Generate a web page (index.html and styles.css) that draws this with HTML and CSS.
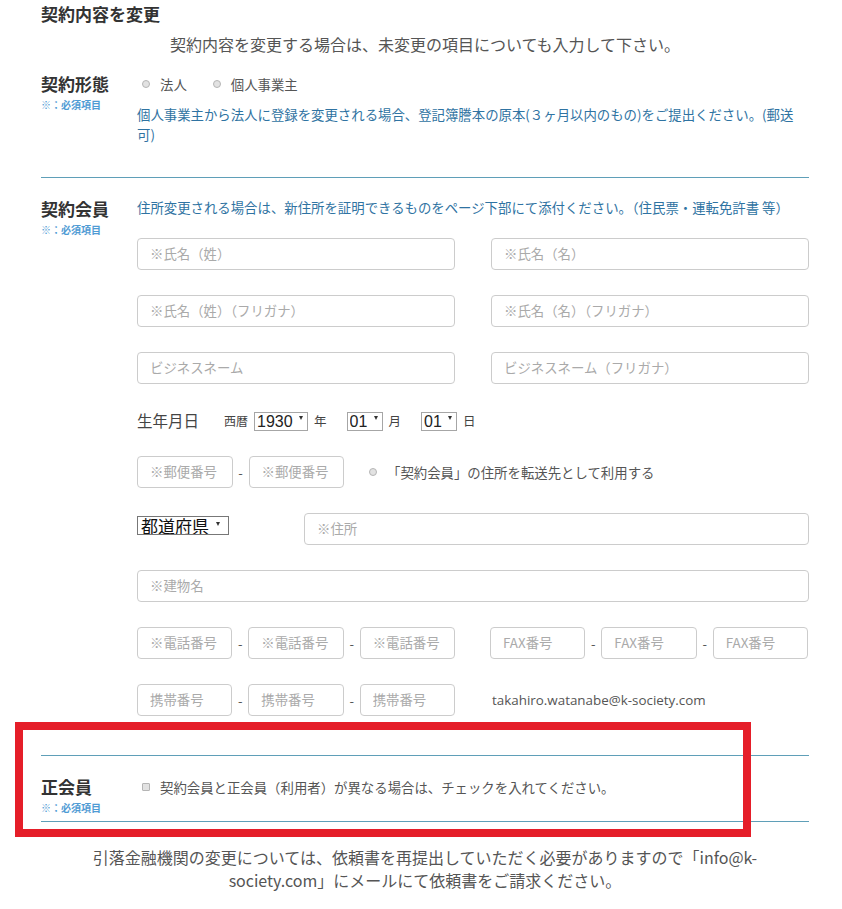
FILE: index.html
```html
<!DOCTYPE html>
<html lang="ja">
<head>
    <meta charset="UTF-8">
    <title>契約内容を変更</title>
    <link rel="stylesheet" href="styles.css">
</head>
<body>
    <div class="wrap">
        <h2 class="ttl">契約内容を変更</h2>
        <p class="lead">契約内容を変更する場合は、未変更の項目についても入力して下さい。</p>

        <!-- 契約形態 -->
        <div class="row first">
            <div class="row-label">
                <h3>契約形態</h3>
                <span class="req">※：必須項目</span>
            </div>
            <div class="row-body">
                <div class="opts">
                    <label class="opt"><input type="radio" name="type">法人</label>
                    <label class="opt"><input type="radio" name="type">個人事業主</label>
                </div>
                <p class="note">個人事業主から法人に登録を変更される場合、登記簿謄本の原本(３ヶ月以内のもの)をご提出ください。(郵送可)</p>
            </div>
        </div>

        <!-- 契約会員 -->
        <div class="sec">
            <div class="row">
                <div class="row-label">
                    <h3>契約会員</h3>
                    <span class="req">※：必須項目</span>
                </div>
                <div class="row-body">
                    <p class="note top">住所変更される場合は、新住所を証明できるものをページ下部にて添付ください。（住民票・運転免許書 等）</p>
                    <div class="fields">
                        <div class="pair">
                            <input class="txt" type="text" placeholder="※氏名（姓）">
                            <input class="txt" type="text" placeholder="※氏名（名）">
                        </div>
                        <div class="pair">
                            <input class="txt" type="text" placeholder="※氏名（姓）（フリガナ）">
                            <input class="txt" type="text" placeholder="※氏名（名）（フリガナ）">
                        </div>
                        <div class="pair">
                            <input class="txt" type="text" placeholder="ビジネスネーム">
                            <input class="txt" type="text" placeholder="ビジネスネーム（フリガナ）">
                        </div>
                        <div class="birth">
                            <span class="birth-ttl">生年月日</span>
                            <span class="era">西暦</span>
                            <span class="sel"><select><option>1930</option></select></span>
                            <span class="unit">年</span>
                            <span class="sel"><select><option>01</option></select></span>
                            <span class="unit">月</span>
                            <span class="sel"><select><option>01</option></select></span>
                            <span class="unit">日</span>
                        </div>
                        <div class="postal">
                            <div class="group">
                                <input class="txt" type="text" placeholder="※郵便番号">
                                <span class="dash">-</span>
                                <input class="txt" type="text" placeholder="※郵便番号">
                            </div>
                            <label class="opt fwd"><input type="radio" name="fwd">「契約会員」の住所を転送先として利用する</label>
                        </div>
                        <div class="pref">
                            <span class="sel big"><select><option>都道府県</option></select></span>
                            <input class="txt addr" type="text" placeholder="※住所">
                        </div>
                        <input class="txt" type="text" placeholder="※建物名">
                        <div class="pair tel">
                            <div class="group">
                                <input class="txt" type="text" placeholder="※電話番号">
                                <span class="dash">-</span>
                                <input class="txt" type="text" placeholder="※電話番号">
                                <span class="dash">-</span>
                                <input class="txt" type="text" placeholder="※電話番号">
                            </div>
                            <div class="group">
                                <input class="txt" type="text" placeholder="FAX番号">
                                <span class="dash">-</span>
                                <input class="txt" type="text" placeholder="FAX番号">
                                <span class="dash">-</span>
                                <input class="txt" type="text" placeholder="FAX番号">
                            </div>
                        </div>
                        <div class="pair tel">
                            <div class="group">
                                <input class="txt" type="text" placeholder="携帯番号">
                                <span class="dash">-</span>
                                <input class="txt" type="text" placeholder="携帯番号">
                                <span class="dash">-</span>
                                <input class="txt" type="text" placeholder="携帯番号">
                            </div>
                            <div class="mail">takahiro.watanabe@k-society.com</div>
                        </div>
                    </div>
                </div>
            </div>
        </div>

        <!-- 正会員 -->
        <div class="sec flag">
            <div class="row">
                <div class="row-label">
                    <h3>正会員</h3>
                    <span class="req">※：必須項目</span>
                </div>
                <div class="row-body">
                    <label class="opt"><input type="checkbox">契約会員と正会員（利用者）が異なる場合は、チェックを入れてください。</label>
                </div>
            </div>
        </div>

        <p class="foot">引落金融機関の変更については、依頼書を再提出していただく必要がありますので「info@k-society.com」にメールにて依頼書をご請求ください。</p>
    </div>
</body>
</html>
```

FILE: styles.css
```css
body,h2,h3,p {margin:0;padding:0;}
body {background:#fff;color:#555;font-family:"Noto Sans CJK JP","Noto Sans",sans-serif;}

.wrap {width:768px;margin-left:41px;padding-top:2px;}
.ttl {font-size:17px;line-height:24px;color:#333;font-weight:bold;}
.lead {margin-top:6px;text-align:center;font-size:16px;line-height:24px;}

/* 行 */
.row {display:grid;grid-template-columns:96px 1fr;}
.row.first {margin-top:16px;}
.row-label h3 {font-size:17px;line-height:24px;color:#333;font-weight:bold;}
.req {display:block;margin-top:2px;font-size:10px;line-height:14px;color:#4f9bd4;font-weight:bold;}

.opts {display:flex;height:24px;align-items:center;}
.opt {display:flex;align-items:center;font-size:13.4px;line-height:24px;color:#555;}
.opt + .opt {margin-left:21px;}
.opt input {appearance:none;-webkit-appearance:none;margin:0 10px 0 5px;width:8px;height:8px;border:1px solid #b5b5b5;border-radius:50%;background:#e2e2e2;box-sizing:border-box;}
.opt input[type=checkbox] {border-radius:1px;}

.note {margin-top:8px;font-size:13.4px;line-height:20px;color:#2f73a2;}
.note.top {margin-top:0;}

/* 区切り */
.sec {margin-top:33px;padding-top:19px;border-top:1px solid #5f9fb8;}

/* 入力欄 */
.fields {display:flex;flex-direction:column;gap:25px;margin-top:21px;}
.pair {display:grid;grid-template-columns:318px 318px;column-gap:36px;}
.pair.tel {column-gap:35px;}
.txt {box-sizing:border-box;width:100%;height:32px;padding:0 12px 3px;border:1px solid #ccc;border-radius:4px;font:13.4px "Noto Sans CJK JP",sans-serif;color:#555;background:#fff;}
.txt::placeholder {color:#aaa;}

.group {display:flex;align-items:center;}
.group .txt {flex:1;min-width:0;}
.dash {width:16px;text-align:center;font-size:13px;color:#555;}

.birth {display:flex;align-items:center;height:22px;}
.birth-ttl {font-size:15.5px;color:#444;}
.era {margin-left:25px;font-size:12px;color:#444;}
.unit {margin-left:6px;font-size:12.5px;color:#444;}
.unit + .sel {margin-left:20px;}
.era + .sel {margin-left:6px;}

.sel {position:relative;display:inline-block;}
.sel select {appearance:none;-webkit-appearance:none;height:19px;margin:0;padding:0 14px 0 2px;border:1px solid #a6a6a6;border-radius:0;background:#fff;font:16px/17px "Liberation Sans",Arial,sans-serif;color:#222;}
.sel:after {content:"";position:absolute;right:5px;top:8px;border-left:2px solid transparent;border-right:2px solid transparent;border-top:4px solid #333;}
.sel.big select {width:92px;padding-left:3px;font:17px/17px "Noto Sans CJK JP",sans-serif;color:#111;border-color:#777;}
.sel.big:after {right:9px;}

.postal {display:flex;align-items:center;}
.postal .group {width:207px;}
.opt.fwd input {margin-left:25px;}

.pref {display:flex;align-items:flex-start;}
.pref .sel {margin-top:1px;}
.pref .addr {flex:1;margin-left:75px;}

.mail {display:flex;align-items:center;padding-left:2px;font:13.4px "Open Sans","Noto Sans",sans-serif;color:#555;}

/* 正会員 */
.sec.flag {position:relative;margin-top:39px;padding-bottom:6px;border-bottom:1px solid #5f9fb8;}
.sec.flag:after {content:"";position:absolute;left:-26px;top:-34px;width:736px;height:115px;box-sizing:border-box;border:8px solid #e51e29;pointer-events:none;}

.foot {width:700px;margin:24px auto 0;text-align:center;font-size:16px;line-height:23px;color:#555;}
```
